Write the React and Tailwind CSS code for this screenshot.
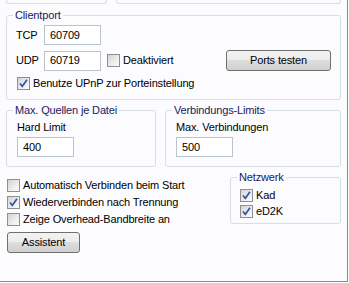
import React from 'react'

const legendCls = 'ml-[6px] px-[2px] leading-[13px] text-[#15205e]'
const groupCls = 'border border-[#d5dfe5] rounded-[3px]'

function Box({ checked }) {
  return (
    <span className="w-[13px] h-[13px] shrink-0 border border-[#8f8f8f] bg-[linear-gradient(135deg,#d3d3d3_0%,#eeeeee_60%,#fbfbfb_100%)] flex items-center justify-center">
      {checked && (
        <svg width="11" height="11" viewBox="0 0 11 11">
          <path d="M2 5.5 L4.3 8.3 L9 1.8" fill="none" stroke="#3553a8" strokeWidth="1.7" />
        </svg>
      )}
    </span>
  )
}

function Check({ label, checked, className = '' }) {
  return (
    <div className={`flex items-center ${className}`}>
      <Box checked={checked} />
      <span className="ml-[3px] leading-[13px] whitespace-nowrap">{label}</span>
    </div>
  )
}

function Field({ value, className = '' }) {
  return (
    <div className={`w-[57px] h-[20px] border border-[#bac4cc] bg-white pl-[5px] flex items-center leading-[13px] ${className}`}>
      {value}
    </div>
  )
}

function Button({ children, className = '' }) {
  return (
    <div className={`h-[21px] border border-[#707070] rounded-[3px] bg-[linear-gradient(#f3f3f3_0%,#ececec_50%,#dedede_50%,#d0d0d0_100%)] flex items-center justify-center leading-[13px] ${className}`}>
      {children}
    </div>
  )
}

export default function App() {
  return (
    <div className="w-[349px] h-[283px] bg-white" style={{ fontFamily: '"Liberation Sans", Arial, sans-serif' }}>
      <div className="w-[348px] h-[282px] border-r border-b border-[#8a8a8a] bg-[#fcfcfe] px-[6px] text-[11px] tracking-[-0.15px] text-black">
        <div className="flex">
          <div className="w-[101px] h-[4px] border-x border-b border-[#d5dfe5] rounded-b-[3px]" />
          <div className="ml-[9px] w-[225px] h-[4px] border-x border-b border-[#d5dfe5] rounded-b-[3px]" />
        </div>

        <fieldset className={`${groupCls} mt-[5px] h-[91px]`}>
          <legend className={legendCls}>Clientport</legend>
          <div className="pl-[9px] pr-[9px] pt-[3px]">
            <div className="flex items-center h-[20px]">
              <span className="w-[28px] leading-[13px]">TCP</span>
              <Field value="60709" />
            </div>
            <div className="flex items-center h-[21px] mt-[5px]">
              <span className="w-[28px] leading-[13px]">UDP</span>
              <Field value="60719" />
              <Check label="Deaktiviert" className="ml-[6px]" />
              <Button className="ml-auto w-[105px]">Ports testen</Button>
            </div>
            <Check label="Benutze UPnP zur Porteinstellung" checked className="mt-[6px] ml-[1px]" />
          </div>
        </fieldset>

        <div className="flex mt-[4px]">
          <fieldset className={`${groupCls} w-[150px] h-[63px]`}>
            <legend className={legendCls}>Max. Quellen je Datei</legend>
            <div className="pl-[10px] pt-[4px]">
              <div className="leading-[13px]">Hard Limit</div>
              <Field value="400" className="mt-[3px]" />
            </div>
          </fieldset>
          <fieldset className={`${groupCls} ml-[9px] w-[176px] h-[63px]`}>
            <legend className={legendCls}>Verbindungs-Limits</legend>
            <div className="pl-[10px] pt-[4px]">
              <div className="leading-[13px]">Max. Verbindungen</div>
              <Field value="500" className="mt-[3px]" />
            </div>
          </fieldset>
        </div>

        <div className="flex items-start">
          <div className="flex-1 mt-[10px] pl-[1px]">
            <Check label="Automatisch Verbinden beim Start" className="h-[17px]" />
            <Check label="Wiederverbinden nach Trennung" checked className="h-[17px]" />
            <Check label="Zeige Overhead-Bandbreite an" className="h-[17px]" />
            <Button className="mt-[4px] w-[73px] h-[21px]">Assistent</Button>
          </div>
          <fieldset className={`${groupCls} mt-[4px] w-[111px] h-[53px]`}>
            <legend className={legendCls}>Netzwerk</legend>
            <div className="pl-[9px] pt-[3px]">
              <Check label="Kad" checked className="h-[16px]" />
              <Check label="eD2K" checked className="h-[16px]" />
            </div>
          </fieldset>
        </div>
      </div>
    </div>
  )
}
